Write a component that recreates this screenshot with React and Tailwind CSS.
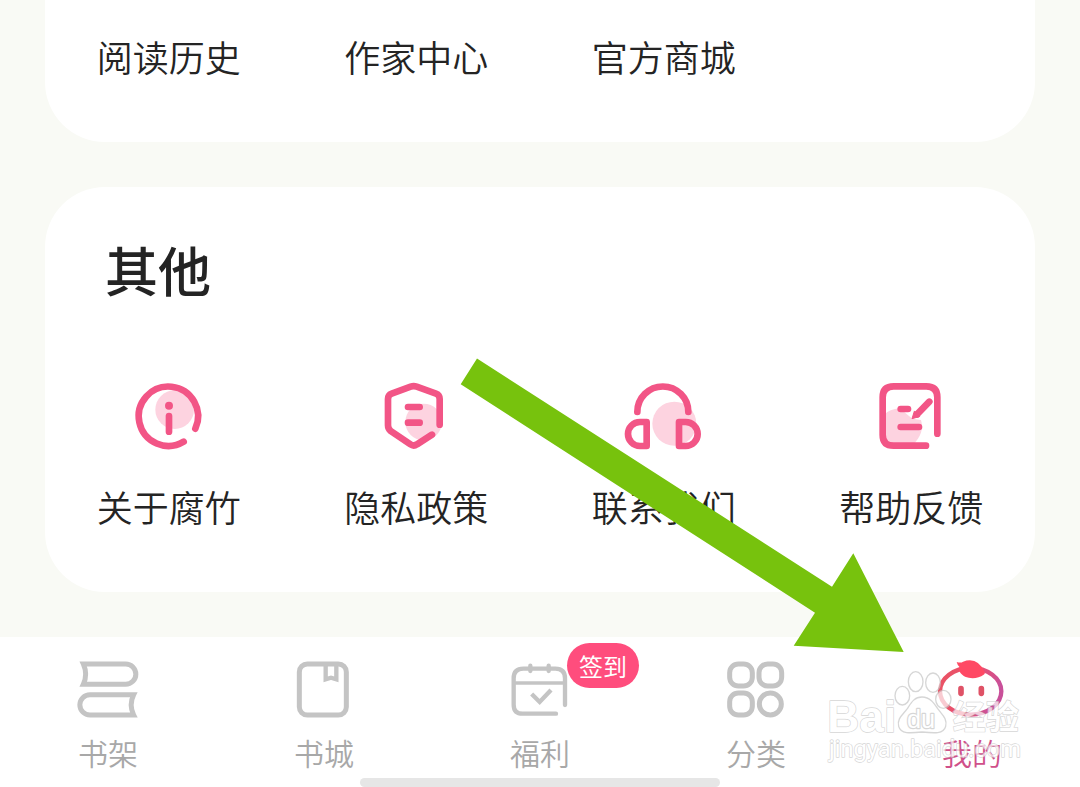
import React from "react";

const PINK = "#f25586";
const GRAY = "#c4c4c4";

function ItemIcon({ viewBox, children }) {
  return (
    <svg
      className="h-20 w-20"
      viewBox={viewBox}
      fill="none"
      stroke={PINK}
      strokeWidth="20"
      strokeLinecap="round"
      strokeLinejoin="round"
      aria-hidden="true"
    >
      {children}
    </svg>
  );
}

function AboutIcon() {
  return (
    <ItemIcon viewBox="26 18 240 240">
      <circle cx="163" cy="119" r="58" fill="#fdd3e0" stroke="none" />
      <path d="M190 215A89 89 0 1 1 225 176" />
      <circle cx="146" cy="107" r="12" fill={PINK} stroke="none" />
      <path d="M146 138V185" />
    </ItemIcon>
  );
}

function PrivacyIcon() {
  return (
    <ItemIcon viewBox="19 18 240 240">
      <circle cx="162" cy="156" r="55" fill="#fdd3e0" stroke="none" />
      <path d="M210 164V87Q210 75 199 71L141 50Q132 47 123 50L66 71Q55 75 55 87V166Q55 176 63 183L122 223Q132 230 142 223L187 194" />
      <path d="M115 111H150M115 158H150" />
    </ItemIcon>
  );
}

function ContactIcon() {
  return (
    <ItemIcon viewBox="35 18 240 240">
      <circle cx="186" cy="161" r="66" fill="#fdd3e0" stroke="none" />
      <path d="M75 126A76 76 0 0 1 228 126" />
      <path d="M103 156H83A36 36 0 0 0 83 228H103Z" />
      <path d="M200 156H220A36 36 0 0 1 220 228H200Z" />
    </ItemIcon>
  );
}

function FeedbackIcon() {
  return (
    <ItemIcon viewBox="34 18 240 240">
      <path d="M72 135Q90 117 120 115L158 146L184 150Q196 190 158 226H95Q70 222 70 200Z" fill="#fdd3e0" stroke="none" />
      <path d="M199 227H102Q69 227 69 194V82Q69 49 102 49H200Q233 49 233 82V191" />
      <path d="M123 117H145M123 171H178" />
      <path d="M209 95L172 133" />
      <path d="M164 124L157 146L179 140Z" fill={PINK} strokeWidth="3" />
    </ItemIcon>
  );
}

function NavIcon({ viewBox, children }) {
  return (
    <svg
      className="h-16 w-16 overflow-visible"
      viewBox={viewBox}
      fill="none"
      stroke={GRAY}
      strokeWidth="15"
      aria-hidden="true"
    >
      {children}
    </svg>
  );
}

function ShelfIcon() {
  return (
    <NavIcon viewBox="48 39 192 192">
      <path d="M70 57H197A30 30 0 0 1 197 118H70Q84 88 70 57Z" />
      <path d="M221 149H90A30 30 0 0 0 90 210H221Q206 180 221 149Z" />
    </NavIcon>
  );
}

function StoreIcon() {
  return (
    <NavIcon viewBox="696 39 192 192">
      <rect x="718" y="57" width="141" height="153" rx="24" />
      <path d="M797 58V103L813 98L829 103V58" strokeWidth="13" />
    </NavIcon>
  );
}

function WelfareIcon() {
  return (
    <NavIcon viewBox="54 69 192 192">
      <g strokeLinecap="round" strokeWidth="13">
        <path d="M198 236H98Q71 236 71 209V130Q71 101 100 101H196Q225 101 225 130V210" />
        <path d="M72 144H224" strokeWidth="11" strokeLinecap="butt" />
        <path d="M121 92V108M176 92V108" />
        <path d="M125 177L149 201L183 165" strokeLinecap="butt" />
      </g>
    </NavIcon>
  );
}

function CategoryIcon() {
  return (
    <NavIcon viewBox="702 69 192 192">
      <rect x="719" y="87" width="68" height="66" rx="26" />
      <rect x="807" y="87" width="68" height="66" rx="26" />
      <rect x="719" y="174" width="68" height="66" rx="26" />
      <circle cx="841" cy="207" r="33" />
    </NavIcon>
  );
}

function MineIcon() {
  return (
    <NavIcon viewBox="480 69 192 192">
      <defs>
        <linearGradient id="face" x1="0" x2="1" y1="0" y2="0.3">
          <stop offset="0" stopColor="#ea5363" />
          <stop offset="0.6" stopColor="#e8506f" />
          <stop offset="1" stopColor="#c9509a" />
        </linearGradient>
      </defs>
      <ellipse cx="572" cy="169" rx="92" ry="70" stroke="url(#face)" strokeWidth="13" />
      <path d="M530 81Q543 85 549 80Q592 64 614 111Q616 117 611 119C590 135 552 133 539 110Q535 100 538 95Q532 90 530 81Z" fill="#ff4964" stroke="none" />
      <path d="M543 161V175M604 161V175" stroke="#df5266" strokeWidth="17" strokeLinecap="round" />
    </NavIcon>
  );
}

const shortcuts = ["阅读历史", "作家中心", "官方商城"];

const others = [
  { label: "关于腐竹", Icon: AboutIcon },
  { label: "隐私政策", Icon: PrivacyIcon },
  { label: "联系我们", Icon: ContactIcon },
  { label: "帮助反馈", Icon: FeedbackIcon },
];

const tabs = [
  { label: "书架", Icon: ShelfIcon },
  { label: "书城", Icon: StoreIcon },
  { label: "福利", Icon: WelfareIcon, badge: "签到" },
  { label: "分类", Icon: CategoryIcon },
  { label: "我的", Icon: MineIcon, active: true },
];

function Watermark() {
  return (
    <svg
      className="pointer-events-none absolute right-[59px] bottom-[22px] w-[194px] overflow-visible opacity-70"
      viewBox="141 99 582 291"
      fill="#ffffff"
      stroke="#c6c6c6"
      strokeWidth="4"
      strokeLinejoin="round"
      aria-hidden="true"
    >
      <ellipse cx="367" cy="182" rx="22" ry="28" />
      <ellipse cx="407" cy="140" rx="22" ry="30" />
      <ellipse cx="459" cy="143" rx="22" ry="29" />
      <ellipse cx="490" cy="193" rx="23" ry="27" />
      <path d="M426 186C450 186 462 204 473 221C486 239 503 251 497 274C491 297 464 295 426 291C390 295 362 297 356 274C350 251 369 239 382 221C393 204 402 186 426 186Z" />
      <g className="font-['Liberation_Sans',sans-serif] font-bold" paintOrder="stroke">
        <text x="142" y="290" fontSize="133">Bai</text>
        <text x="381" y="278" fontSize="76" strokeWidth="7" className="font-normal">du</text>
      </g>
      <text x="518" y="281" fontSize="99" paintOrder="stroke" className="font-['Noto_Sans_CJK_SC',sans-serif] font-bold">经验</text>
      <text x="147" y="367" fontSize="71" paintOrder="stroke" className="font-[Roboto,sans-serif] font-normal">jingyan.baidu.com</text>
    </svg>
  );
}

export default function App() {
  return (
    <div className="relative flex min-h-screen flex-col overflow-hidden bg-[#f9faf5] font-['Noto_Sans_CJK_SC',sans-serif] font-[350] text-[#242424]">
      <main className="flex flex-1 flex-col gap-[45px] px-[45px] pb-[45px]">
        <section className="grid grid-cols-4 rounded-b-[60px] bg-white pt-8 pb-[62px]">
          {shortcuts.map((label) => (
            <a key={label} href="#" className="text-center text-4xl leading-[48px]">
              {label}
            </a>
          ))}
        </section>

        <section className="rounded-[60px] bg-white pt-[46px] pb-[62px]">
          <h2 className="px-[60px] text-[53px] leading-[72px] font-medium">其他</h2>
          <div className="mt-[71px] grid grid-cols-4">
            {others.map(({ label, Icon }) => (
              <a key={label} href="#" className="flex flex-col items-center gap-[26px] text-4xl leading-[48px]">
                <Icon />
                <span>{label}</span>
              </a>
            ))}
          </div>
        </section>
      </main>

      <nav className="relative bg-white pt-[21px]">
        <div className="grid grid-cols-5">
          {tabs.map(({ label, Icon, badge, active }) => (
            <a
              key={label}
              href="#"
              aria-current={active ? "page" : undefined}
              className={`flex flex-col items-center gap-[10px] text-3xl leading-10 ${active ? "text-[#d0508a]" : "text-[#a8a8a8]"}`}
            >
              <span className="relative">
                <Icon />
                {badge && (
                  <span className="absolute -top-[15px] left-[59px] flex h-[45px] w-[72px] items-center justify-center rounded-full bg-[#ff4d7d] text-2xl font-normal text-white">
                    {badge}
                  </span>
                )}
              </span>
              <span className="leading-10">{label}</span>
            </a>
          ))}
        </div>
        <div className="mx-auto mt-[6px] h-[9px] w-1/3 rounded-full bg-[#e6e6e6]" />
        <Watermark />
      </nav>

      <svg
        className="pointer-events-none absolute top-[358px] left-[460px] w-[444px]"
        viewBox="460 358 444 295"
        aria-hidden="true"
      >
        <path d="M477 358.500L832 586.700L853.300 553.300L903.700 652L793.700 645.700L815 612.700L460.700 384.300Z" fill="#77c20d" />
      </svg>
    </div>
  );
}
